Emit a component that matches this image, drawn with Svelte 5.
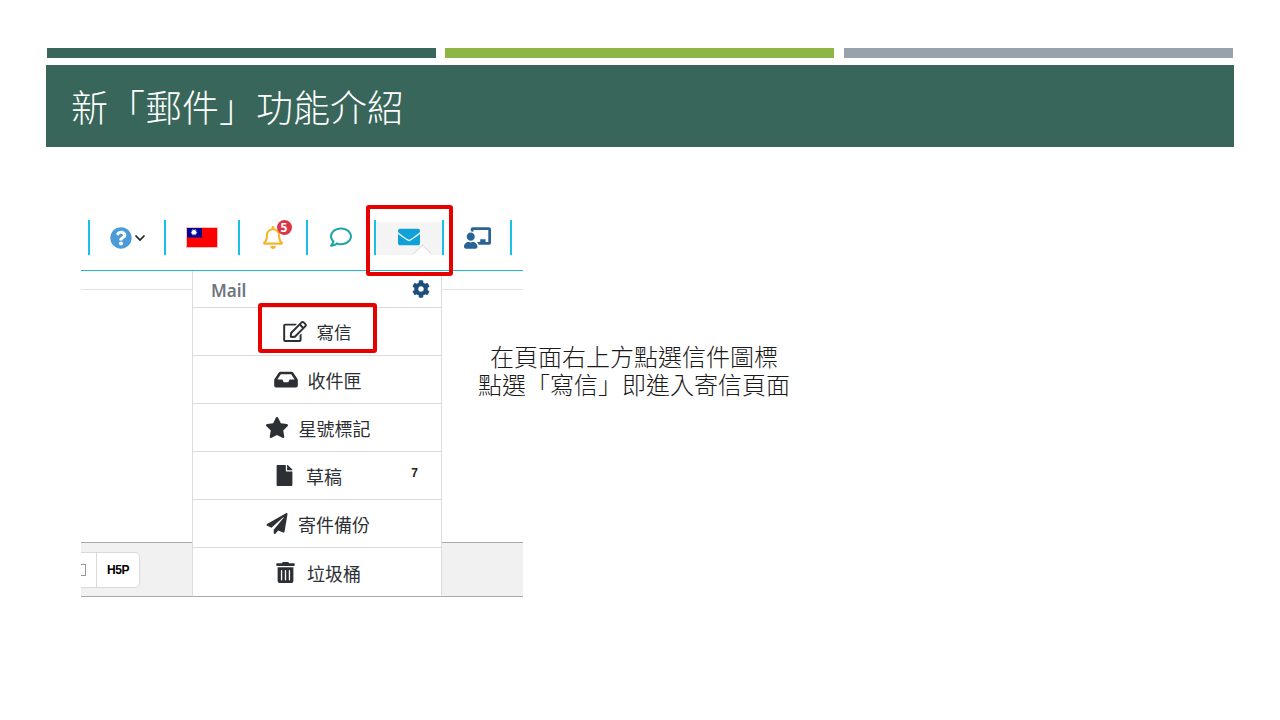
<script>
	const menu = [
		{ id: 'edit', label: '寫信', viewBox: '0 0 576 512', w: 24, gap: 10, shift: 0, d: 'M402.3 344.9l32-32c5-5 13.7-1.5 13.7 5.7V464c0 26.5-21.5 48-48 48H48c-26.5 0-48-21.5-48-48V112c0-26.5 21.5-48 48-48h273.5c7.1 0 10.7 8.6 5.7 13.7l-32 32c-1.5 1.5-3.5 2.3-5.7 2.3H48v352h352V350.5c0-2.1.8-4.1 2.3-5.6zm156.6-201.8L296.3 405.7l-90.4 10c-26.2 2.9-48.5-19.2-45.6-45.6l10-90.4L432.9 17.1c22.9-22.9 59.9-22.9 82.7 0l43.2 43.2c22.9 22.9 22.9 60 .1 82.8zM460.1 174L402 115.9 216.2 301.8l-7.3 65.3 65.3-7.3L460.1 174zm64.8-79.7l-43.2-43.2c-4.1-4.1-10.8-4.1-14.8 0L436 82l58.1 58.1 30.9-30.9c4-4.2 4-10.8-.1-14.9z' },
		{ id: 'inbox', label: '收件匣', viewBox: '0 0 576 512', w: 24, gap: 10, shift: 1, d: 'M567.938 243.908L462.25 85.374A48.003 48.003 0 0 0 422.311 64H153.689a48 48 0 0 0-39.938 21.374L8.062 243.908A47.994 47.994 0 0 0 0 270.533V400c0 26.51 21.49 48 48 48h480c26.51 0 48-21.49 48-48V270.533a47.994 47.994 0 0 0-8.062-26.625zM162.252 128h251.497l85.333 128H376l-32 64H232l-32-64H76.918l85.334-128z' },
		{ id: 'star', label: '星號標記', viewBox: '0 0 576 512', w: 24, gap: 10, shift: 1, d: 'M259.3 17.8L194 150.2 47.9 171.5c-26.2 3.8-36.7 36.1-17.7 54.6l105.7 103-25 145.5c-4.5 26.3 23.2 46 46.4 33.7L288 439.6l130.7 68.7c23.2 12.2 50.9-7.4 46.4-33.7l-25-145.5 105.7-103c19-18.5 8.5-50.8-17.7-54.6L382 150.2 316.7 17.8c-11.7-23.6-45.6-23.9-57.4 0z' },
		{ id: 'file', label: '草稿', count: 7, viewBox: '0 0 384 512', w: 17, gap: 13, shift: -16, d: 'M224 136V0H24C10.7 0 0 10.7 0 24v464c0 13.3 10.7 24 24 24h336c13.3 0 24-10.7 24-24V160H248c-13.2 0-24-10.8-24-24zm160-14.1v6.1H256V0h6.1c6.4 0 12.5 2.5 17 7l97.9 98c4.5 4.5 7 10.6 7 16.9z' },
		{ id: 'plane', label: '寄件備份', viewBox: '0 0 512 512', w: 22, gap: 10, shift: 2, d: 'M476 3.2L12.5 270.6c-18.1 10.4-15.8 35.6 2.2 43.2L121 358.4l287.3-253.2c5.5-4.9 13.3 2.6 8.6 8.3L176 407v80.5c0 23.6 28.5 32.9 42.5 15.8L282 426l124.6 52.2c14.2 6 30.4-2.9 33-18.2l72-432C515 7.8 493.3-6.8 476 3.2z' },
		{ id: 'trash', label: '垃圾桶', viewBox: '0 0 448 512', w: 19, gap: 12, shift: 3, d: 'M32 464a48 48 0 0 0 48 48h288a48 48 0 0 0 48-48V128H32zm272-256a16 16 0 0 1 32 0v224a16 16 0 0 1-32 0zm-96 0a16 16 0 0 1 32 0v224a16 16 0 0 1-32 0zm-96 0a16 16 0 0 1 32 0v224a16 16 0 0 1-32 0zM432 32H312l-9.4-18.7A24 24 0 0 0 281.1 0H166.8a23.72 23.72 0 0 0-21.4 13.3L136 32H16A16 16 0 0 0 0 48v32a16 16 0 0 0 16 16h416a16 16 0 0 0 16-16V48a16 16 0 0 0-16-16z' }
	];

	// twelve rays of the flag's sun
	const rays = Array.from({ length: 12 }, (_, i) => i * 30);
</script>

<main class="slide">
	<div class="accents">
		<span class="accent dark"></span>
		<span class="accent green"></span>
		<span class="accent grey"></span>
	</div>

	<h1 class="title">新「郵件」功能介紹</h1>

	<section class="content">
		<div class="shot">
			<nav class="navbar">
				<div class="cell help">
					<svg class="i-help" viewBox="0 0 512 512"><path d="M504 256c0 136.997-111.043 248-248 248S8 392.997 8 256C8 119.083 119.043 8 256 8s248 111.083 248 248zM262.655 90c-54.497 0-89.255 22.957-116.549 63.758-3.536 5.286-2.353 12.415 2.715 16.258l34.699 26.31c5.205 3.947 12.621 3.008 16.665-2.122 17.864-22.658 30.113-35.797 57.303-35.797 20.429 0 45.698 13.148 45.698 32.958 0 14.976-12.363 22.667-32.534 33.976C247.128 238.528 216 254.941 216 296v4c0 6.627 5.373 12 12 12h56c6.627 0 12-5.373 12-12v-1.333c0-28.462 83.186-29.647 83.186-106.667 0-58.002-60.165-102-116.531-102zM256 338c-25.365 0-46 20.635-46 46 0 25.364 20.635 46 46 46s46-20.636 46-46c0-25.365-20.635-46-46-46z" /></svg>
					<svg class="i-chevron" viewBox="0 0 12 8"><path d="M1.5 1.5L6 6l4.500-4.500" /></svg>
				</div>
				<div class="cell flag">
					<svg class="i-flag" viewBox="0 0 32 21">
						<rect width="32" height="21" fill="#fe0000" />
						<rect width="16" height="10.500" fill="#000095" />
						{#each rays as angle}
							<path d="M8 1.500L9 5.250H7z" fill="#fff" transform="rotate({angle} 8 5.250)" />
						{/each}
						<circle cx="8" cy="5.250" r="2.100" fill="#fff" />
					</svg>
				</div>
				<div class="cell bell">
					<span class="bell-wrap">
						<svg class="i-bell" viewBox="0 0 448 512"><path d="M439.39 362.29c-19.32-20.76-55.47-51.99-55.47-154.29 0-77.7-54.48-139.9-127.94-155.16V32c0-17.67-14.32-32-31.98-32s-31.98 14.33-31.98 32v20.84C118.56 68.1 64.08 130.3 64.08 208c0 102.3-36.15 133.53-55.47 154.29-6 6.45-8.66 14.16-8.61 21.71.11 16.4 12.98 32 32.1 32h383.8c19.12 0 32-15.6 32.1-32 .05-7.55-2.61-15.27-8.61-21.71zM67.53 368c21.22-27.97 44.42-74.33 44.53-159.42 0-.2-.06-.38-.06-.58 0-61.86 50.14-112 112-112s112 50.14 112 112c0 .2-.06.38-.06.58.11 85.1 23.31 131.46 44.53 159.42H67.53zM224 512c35.32 0 63.97-28.65 63.97-64H160.03c0 35.35 28.65 64 63.97 64z" /></svg>
						<span class="badge">5</span>
					</span>
				</div>
				<div class="cell chat">
					<svg class="i-chat" viewBox="0 0 512 512"><path d="M256 32C114.6 32 0 125.1 0 240c0 47.6 19.9 91.2 52.9 126.3C38 405.7 7 439.1 6.5 439.5c-6.6 7-8.4 17.2-4.6 26S14.4 480 24 480c61.5 0 110-25.7 139.1-46.3C192 442.8 223.2 448 256 448c141.4 0 256-93.1 256-208S397.4 32 256 32zm0 368c-26.7 0-53.1-4.1-78.4-12.1l-22.7-7.2-19.5 13.8c-14.3 10.1-33.9 21.4-57.5 29 7.3-12.1 14.4-25.7 19.9-40.2l10.6-28.1-20.6-21.8C69.7 314.1 48 282.2 48 240c0-88.2 93.3-160 208-160s208 71.8 208 160-93.3 160-208 160z" /></svg>
				</div>
				<div class="cell mail">
					<svg class="i-mail" viewBox="0 0 512 512"><path d="M502.3 190.8c3.9-3.1 9.7-.2 9.7 4.7V400c0 26.5-21.5 48-48 48H48c-26.5 0-48-21.5-48-48V195.6c0-5 5.7-7.8 9.7-4.7 22.4 17.4 52.1 39.5 154.1 113.6 21.1 15.4 56.7 47.8 92.2 47.6 35.7.3 72-32.8 92.3-47.6 102-74.1 131.6-96.3 154-113.7zM256 320c23.2.4 56.6-29.2 73.4-41.4 132.7-96.3 142.8-104.7 173.4-128.7 5.8-4.5 9.2-11.5 9.2-18.9v-19c0-26.5-21.5-48-48-48H48C21.5 64 0 85.5 0 112v19c0 7.4 3.4 14.3 9.2 18.9 30.6 23.9 40.7 32.4 173.4 128.7 16.8 12.2 50.2 41.8 73.4 41.4z" /></svg>
					<span class="caret"></span>
				</div>
				<div class="cell teach last">
					<svg class="i-teach" viewBox="0 0 640 512"><path d="M208 352c-2.39 0-4.78.35-7.06 1.09C187.98 357.3 174.35 360 160 360c-14.35 0-27.98-2.7-40.95-6.91-2.28-.74-4.66-1.09-7.05-1.09C49.94 352-.33 402.48 0 464.62.14 490.88 21.73 512 48 512h224c26.27 0 47.86-21.12 48-47.38.33-62.14-49.94-112.62-112-112.62zm-48-32c53.02 0 96-42.98 96-96s-42.98-96-96-96-96 42.98-96 96 42.98 96 96 96zM592 0H208c-26.47 0-48 22.25-48 49.59V96c23.42 0 45.1 6.78 64 17.8V64h352v288h-64v-64H384v64h-76.24c19.1 16.69 33.12 38.73 39.69 64H592c26.47 0 48-22.25 48-49.59V49.59C640 22.25 618.47 0 592 0z" /></svg>
				</div>
			</nav>

			<div class="below">
				<div class="side">
					<div class="strip"></div>
					<div class="band">
						<div class="toolbar">
							<span class="tool-cut"><span class="tool-glyph"></span></span>
							<span class="tool-h5p">H5P</span>
						</div>
					</div>
				</div>

				<div class="dropdown">
					<div class="drop-head">
						<span class="drop-title">Mail</span>
						<svg class="i-cog" viewBox="0 0 512 512"><path d="M487.4 315.7l-42.6-24.6c4.3-23.2 4.3-47 0-70.2l42.6-24.6c4.9-2.8 7.1-8.6 5.5-14-11.1-35.6-30-67.8-54.7-94.6-3.8-4.1-10-5.1-14.8-2.3L380.8 110c-17.9-15.4-38.5-27.3-60.8-35.1V25.8c0-5.6-3.9-10.5-9.4-11.7-36.7-8.2-74.3-7.8-109.2 0-5.5 1.2-9.4 6.1-9.4 11.7V75c-22.2 7.9-42.8 19.8-60.8 35.1L88.7 85.5c-4.9-2.8-11-1.9-14.8 2.3-24.7 26.7-43.6 58.9-54.7 94.6-1.7 5.4.6 11.2 5.5 14L67.3 221c-4.3 23.2-4.3 47 0 70.2l-42.6 24.6c-4.9 2.8-7.1 8.6-5.5 14 11.1 35.6 30 67.8 54.7 94.6 3.8 4.1 10 5.1 14.8 2.3l42.6-24.6c17.9 15.4 38.5 27.3 60.8 35.1v49.2c0 5.6 3.9 10.5 9.4 11.7 36.7 8.2 74.3 7.8 109.2 0 5.5-1.2 9.4-6.1 9.4-11.7v-49.2c22.2-7.9 42.8-19.8 60.8-35.1l42.6 24.6c4.9 2.8 11 1.9 14.8-2.3 24.7-26.7 43.6-58.9 54.7-94.6 1.5-5.5-.7-11.3-5.6-14.1zM256 336c-44.1 0-80-35.9-80-80s35.9-80 80-80 80 35.9 80 80-35.9 80-80 80z" /></svg>
					</div>
					{#each menu as item}
						<div class="drop-row">
							<svg class="row-icon" viewBox={item.viewBox} style="width: {item.w}px; margin: 0 {item.gap}px 0 {item.shift}px"><path d={item.d} /></svg>
							<span class="row-label" class:small={item.id === 'edit'}>{item.label}</span>
							{#if item.count}<span class="row-count">{item.count}</span>{/if}
						</div>
					{/each}
				</div>

				<div class="side">
					<div class="strip"></div>
					<div class="band"></div>
				</div>
			</div>

			<span class="red-box red-mail"></span>
			<span class="red-box red-write"></span>
		</div>

		<div class="note">
			<p>在頁面右上方點選信件圖標</p>
			<p>點選「寫信」即進入寄信頁面</p>
		</div>
	</section>
</main>

<style>
	:global(body) {
		margin: 0;
		background: #fff;
	}

	.slide {
		width: 1280px;
		height: 720px;
		box-sizing: border-box;
		padding: 48px 46px 0;
		overflow: hidden;
		font-family: 'Noto Sans CJK TC', 'Noto Sans', sans-serif;
	}

	.accents {
		display: flex;
		gap: 9px;
		padding: 0 1px;
		margin-bottom: 7px;
	}

	.accent {
		flex: none;
		width: 389px;
		height: 10px;
	}

	.dark {
		background: #39665a;
	}

	.green {
		background: #8db645;
	}

	.grey {
		margin-left: 1px;
		background: #98a2ad;
	}

	.title {
		margin: 0;
		height: 82px;
		padding-left: 25px;
		background: #39665a;
		color: #fff;
		font-size: 37px;
		font-weight: 300;
		line-height: 82px;
	}

	.content {
		display: flex;
		align-items: flex-start;
		margin: 58px 0 0 35px;
	}

	.shot {
		position: relative;
		flex: none;
		width: 442px;
		height: 392px;
	}

	/* nav bar of the captured page */
	.navbar {
		display: flex;
		box-sizing: border-box;
		height: 66px;
		padding: 15px 0 0 7px;
		border-bottom: 1px solid #1fb6d4;
	}

	.cell {
		position: relative;
		display: flex;
		align-items: center;
		justify-content: center;
		box-sizing: border-box;
		height: 35px;
		border-left: 2px solid #17bfe9;
	}

	.help {
		width: 76px;
		gap: 2px;
		padding-left: 2px;
	}

	.flag {
		width: 74px;
	}

	.bell,
	.chat,
	.mail {
		width: 68px;
	}

	.teach {
		width: 70px;
		border-right: 2px solid #17bfe9;
	}

	.i-help {
		width: 22px;
		height: 22px;
		fill: #4b9bd8;
	}

	.i-chevron {
		width: 12px;
		height: 8px;
		fill: none;
		stroke: #222;
		stroke-width: 1.7;
	}

	.i-flag {
		width: 32px;
		height: 21px;
		outline: 1px solid #ffb9b9;
		outline-offset: -1px;
	}

	.bell-wrap {
		position: relative;
		display: flex;
		margin-left: -1px;
	}

	.i-bell {
		width: 20px;
		height: 23px;
		fill: #f4b62d;
	}

	.badge {
		position: absolute;
		top: -6px;
		right: -9px;
		width: 15px;
		height: 15px;
		border-radius: 50%;
		background: #dc3545;
		color: #fff;
		font: 700 12px/15px 'Noto Sans', sans-serif;
		text-align: center;
	}

	.i-chat {
		width: 22px;
		height: 22px;
		margin-top: -1px;
		fill: #1ea5a5;
	}

	.mail {
		background: linear-gradient(#f4f4f4, #f4f4f4) center bottom / 100% 33px no-repeat;
	}

	.i-mail {
		width: 22px;
		height: 22px;
		margin-bottom: 1px;
		fill: #0ea2d8;
	}

	.caret {
		position: absolute;
		left: 40px;
		bottom: -5px;
		width: 12px;
		height: 12px;
		border-top: 1px solid #ddd;
		border-left: 1px solid #ddd;
		background: #fff;
		transform: rotate(45deg);
	}

	.i-teach {
		width: 27px;
		height: 22px;
		fill: #2a6496;
	}

	/* captured page under the nav bar */
	.below {
		display: grid;
		grid-template-columns: 111px 250px 81px;
		height: 326px;
	}

	.side {
		display: flex;
		flex-direction: column;
		justify-content: space-between;
	}

	.strip {
		height: 18px;
		border-bottom: 1px solid #e2e2e2;
	}

	.band {
		display: flex;
		align-items: center;
		box-sizing: border-box;
		height: 55px;
		background: #f1f1f1;
		border-top: 1px solid #a8a8a8;
		border-bottom: 1px solid #a8a8a8;
	}

	.toolbar {
		display: flex;
		box-sizing: border-box;
		width: 59px;
		height: 36px;
		margin-top: 1px;
		background: #fff;
		border: 1px solid #d9d9d9;
		border-left: 0;
		border-radius: 0 5px 5px 0;
	}

	.tool-cut {
		display: flex;
		align-items: center;
		width: 15px;
		border-right: 1px solid #d9d9d9;
	}

	.tool-glyph {
		width: 4px;
		height: 10px;
		border: 1px solid #999;
		border-left: 0;
	}

	.tool-h5p {
		flex: 1;
		color: #000;
		font: 700 12px/34px 'Liberation Sans', sans-serif;
		letter-spacing: -0.5px;
		text-align: center;
	}

	.dropdown {
		position: relative;
		z-index: 1;
		display: flex;
		flex-direction: column;
		background: #fff;
		border-left: 1px solid #dcdcdc;
		border-right: 1px solid #dcdcdc;
		border-bottom: 1px solid #a8a8a8;
	}

	.drop-head {
		display: flex;
		align-items: center;
		justify-content: space-between;
		box-sizing: border-box;
		height: 37px;
		padding: 2px 11px 0 18px;
		border-bottom: 1px solid #dcdcdc;
	}

	.drop-title {
		color: #6c757d;
		font: 600 17px/1 'Noto Sans', sans-serif;
	}

	.i-cog {
		width: 18px;
		height: 18px;
		margin-top: -2px;
		fill: #1d4f7c;
	}

	.drop-row {
		position: relative;
		display: flex;
		flex: none;
		align-items: center;
		justify-content: center;
		box-sizing: border-box;
		height: 48px;
		border-bottom: 1px solid #dcdcdc;
		color: #2c2f33;
	}

	.drop-row:last-child {
		border-bottom: 0;
	}

	.row-icon {
		height: 21px;
		fill: #2c2f33;
	}

	.row-label {
		font-size: 18px;
		line-height: 24px;
		margin-top: 1px;
	}

	.row-label.small {
		font-size: 17.5px;
	}

	.row-count {
		position: absolute;
		top: 13px;
		right: 23px;
		color: #222;
		font: 700 12px/16px 'Liberation Sans', sans-serif;
	}

	.red-box {
		position: absolute;
		z-index: 2;
		box-sizing: border-box;
		border: 4px solid #e60000;
		border-radius: 3px;
	}

	.red-mail {
		left: 285px;
		top: 0;
		width: 87px;
		height: 71px;
	}

	.red-write {
		left: 177px;
		top: 98px;
		width: 119px;
		height: 50px;
	}

	.note {
		flex: none;
		width: 320px;
		margin: 137px 0 0 -49px;
		color: #1a1a1a;
		font-size: 24px;
		font-weight: 300;
		text-align: center;
		white-space: nowrap;
	}

	.note p {
		height: 28px;
		margin: 0;
		line-height: 28px;
	}
</style>
